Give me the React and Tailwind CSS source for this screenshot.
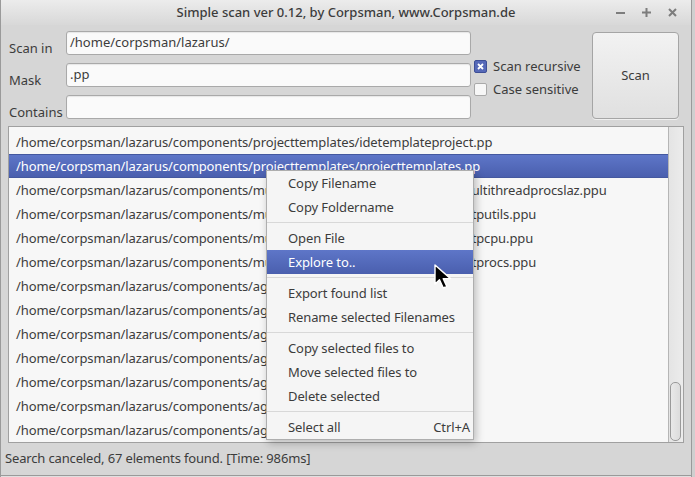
import React from 'react';

const font = { fontFamily: '"Noto Sans", "DejaVu Sans", sans-serif' };

const rows = [
  '/home/corpsman/lazarus/components/projecttemplates/idetemplateproject.pp',
  '/home/corpsman/lazarus/components/projecttemplates/projecttemplates.pp',
  '/home/corpsman/lazarus/components/multithreadprocs/lib/x86_64-linux/multithreadprocslaz.ppu',
  '/home/corpsman/lazarus/components/multithreadprocs/lib/x86_64-linux/mtputils.ppu',
  '/home/corpsman/lazarus/components/multithreadprocs/lib/x86_64-linux/mtpcpu.ppu',
  '/home/corpsman/lazarus/components/multithreadprocs/lib/x86_64-linux/mtprocs.ppu',
  '/home/corpsman/lazarus/components/aggpas/lib/agg_arc.ppu',
  '/home/corpsman/lazarus/components/aggpas/lib/agg_arrowhead.ppu',
  '/home/corpsman/lazarus/components/aggpas/lib/agg_basics.ppu',
  '/home/corpsman/lazarus/components/aggpas/lib/agg_bezier_arc.ppu',
  '/home/corpsman/lazarus/components/aggpas/lib/agg_bitset.ppu',
  '/home/corpsman/lazarus/components/aggpas/lib/agg_blur.ppu',
  '/home/corpsman/lazarus/components/aggpas/lib/agg_bounding_rect.ppu',
];

const menu = [
  ['Copy Filename'],
  ['Copy Foldername'],
  null,
  ['Open File'],
  ['Explore to..', '', true],
  null,
  ['Export found list'],
  ['Rename selected Filenames'],
  null,
  ['Copy selected files to'],
  ['Move selected files to'],
  ['Delete selected'],
  null,
  ['Select all', 'Ctrl+A'],
];

function Field({ label, value }) {
  return (
    <div className="flex h-[24px]">
      <div className="w-[58px] pl-[1px] pt-[8px] text-[13px] leading-[18px]">{label}</div>
      <div className="w-[405px] h-[24px] rounded-[3px] border border-[#a9a9a9] bg-[#fafafa] px-[3px] text-[13px] leading-[21px] shadow-[inset_0_1px_1px_rgba(0,0,0,0.08)]">
        {value}
      </div>
    </div>
  );
}

function Check({ label, checked }) {
  return (
    <div className="flex items-center h-[14px] gap-[6px]">
      {checked ? (
        <div className="w-[13px] h-[13px] rounded-[2px] border border-[#3e4f96] bg-[#5669b8] flex items-center justify-center">
          <svg width="7" height="7" viewBox="0 0 7 7">
            <path d="M1 1 L6 6 M6 1 L1 6" stroke="#fff" strokeWidth="1.8" />
          </svg>
        </div>
      ) : (
        <div className="w-[13px] h-[13px] rounded-[2px] border border-[#a9a9a9] bg-[#f7f7f7]" />
      )}
      <span className="text-[13px] leading-[18px]">{label}</span>
    </div>
  );
}

export default function App() {
  return (
    <div className="relative w-[695px] h-[477px] flex bg-[#cfcfcf] text-[#3c3c3c] overflow-hidden" style={font}>
      <div className="w-[692px] h-[477px] flex flex-col bg-[#d6d6d6] border-l border-r border-[#9a9a9a]">
        {/* title bar */}
        <div className="relative h-[25px] flex items-center justify-center bg-gradient-to-b from-[#ececec] to-[#d8d8d8]">
          <span className="text-[13px] font-medium text-[#3c3c3c]">Simple scan ver 0.12, by Corpsman, www.Corpsman.de</span>
          <div className="absolute right-[14px] top-[8px] flex gap-[17px] items-center">
            <svg width="9" height="9" viewBox="0 0 9 9"><rect x="0" y="4" width="9" height="2" fill="#7d7d7d" /></svg>
            <svg width="9" height="9" viewBox="0 0 9 9"><path d="M4.5 0 V9 M0 4.5 H9" stroke="#7d7d7d" strokeWidth="2" /></svg>
            <svg width="9" height="9" viewBox="0 0 9 9"><path d="M1 1 L8 8 M8 1 L1 8" stroke="#7d7d7d" strokeWidth="2" /></svg>
          </div>
        </div>

        {/* form */}
        <div className="flex pt-[6px] pl-[7px]">
          <div className="flex flex-col gap-[8px]">
            <Field label="Scan in" value="/home/corpsman/lazarus/" />
            <Field label="Mask" value=".pp" />
            <Field label="Contains" value="" />
          </div>
          <div className="w-[121px] pl-[3px] pt-[28px] flex flex-col gap-[9px]">
            <Check label="Scan recursive" checked />
            <Check label="Case sensitive" />
          </div>
          <button className="mt-[1px] w-[87px] h-[87px] rounded-[4px] border border-[#a5a5a5] bg-gradient-to-b from-[#f2f2f2] to-[#e0e0e0] text-[13px] text-[#3c3c3c] shadow-[0_1px_0_rgba(255,255,255,0.6)]">
            Scan
          </button>
        </div>

        {/* list */}
        <div className="mt-[7px] ml-[7px] w-[676px] h-[317px] border border-[#a0a0a0] bg-[#f7f7f7] flex">
          <div className="flex-1 pt-[3px] overflow-hidden tracking-[-0.12px]">
            {rows.map((r, i) => (
              <div
                key={i}
                className={
                  i === 1
                    ? 'h-[24px] pl-[7px] text-[13px] whitespace-nowrap text-white bg-gradient-to-b from-[#5e76c8] to-[#4a5fae] border-y border-[#44589f] leading-[22px]'
                    : 'h-[24px] pl-[7px] text-[13px] leading-[24px] whitespace-nowrap'
                }
              >
                {r}
              </div>
            ))}
          </div>
          <div className="w-[15px] border-l border-[#b5b5b5] bg-gradient-to-r from-[#e4e4e4] to-[#ececec] flex flex-col justify-end pb-[1px] pl-[1px]">
            <div className="w-[11px] h-[59px] rounded-[5px] border border-[#9a9a9a] bg-gradient-to-r from-[#e9e9e9] to-[#dcdcdc]" />
          </div>
        </div>

        {/* status */}
        <div className="flex-1 flex items-center pl-[4px] text-[13px] tracking-[-0.15px]">
          Search canceled, 67 elements found. [Time: 986ms]
        </div>
        <div className="h-[2px] border-t border-[#9a9a9a] bg-[#e0e0e0]" />
      </div>

      {/* context menu */}
      <div className="absolute left-[266px] top-[170px] w-[208px] h-[270px] bg-[#f5f5f5] border border-[#aeaeae] shadow-[2px_3px_8px_rgba(0,0,0,0.25)] flex flex-col tracking-[-0.1px]">
        {menu.map((m, i) =>
          m === null ? (
            <div key={i} className="h-[7px] flex items-center">
              <div className="w-full h-px bg-[#d8d8d8]" />
            </div>
          ) : (
            <div
              key={i}
              className={
                m[2]
                  ? 'h-[24px] flex items-center justify-between pt-[2px] pl-[21px] pr-[3px] text-[13px] text-white bg-gradient-to-b from-[#5e76c8] to-[#4a5fae]'
                  : 'h-[24px] flex items-center justify-between pt-[2px] pl-[21px] pr-[3px] text-[13px]'
              }
            >
              <span>{m[0]}</span>
              {m[1] ? <span>{m[1]}</span> : null}
            </div>
          )
        )}
      </div>

      {/* mouse cursor */}
      <svg className="absolute left-[433px] top-[263px]" width="24" height="28" viewBox="0 0 24 28">
        <path d="M2 2 L2 21 L6.5 16.8 L10.3 25 L13.8 23.4 L10.2 15.6 L17.5 15.6 Z" fill="#000" stroke="#fff" strokeWidth="1.4" strokeLinejoin="round" />
      </svg>
    </div>
  );
}
